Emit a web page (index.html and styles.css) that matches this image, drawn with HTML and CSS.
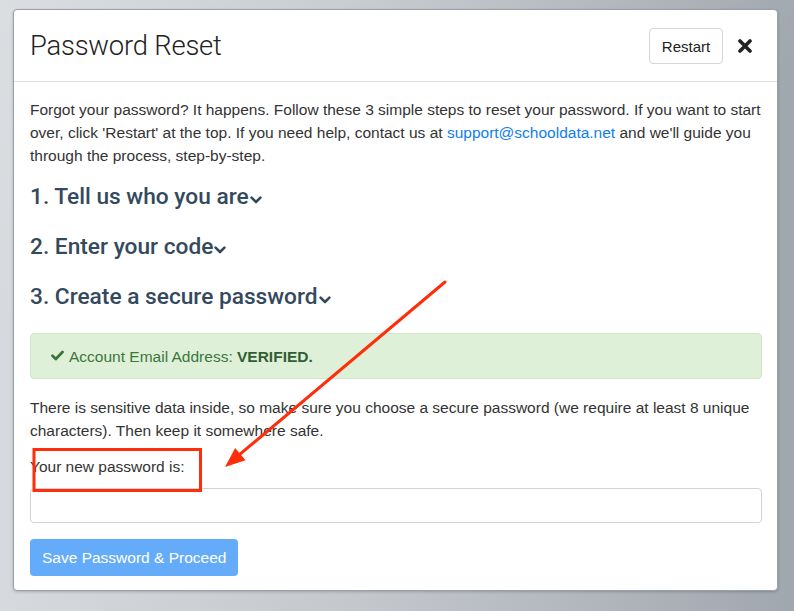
FILE: index.html
```html
<!DOCTYPE html>
<html lang="en">
<head>
<meta charset="utf-8">
<title>Password Reset</title>
<link rel="stylesheet" href="styles.css">
</head>
<body>
<div class="backdrop">
  <div class="modal">
    <div class="modal-header">
      <h2 class="modal-title">Password Reset</h2>
      <div class="header-actions">
        <button class="btn-restart" type="button">Restart</button>
        <button class="btn-close" type="button" aria-label="Close">
          <svg width="14" height="14" viewBox="0 0 14 14"><path d="M2 2 L12 12 M12 2 L2 12" stroke="#222" stroke-width="3.6" stroke-linecap="round"/></svg>
        </button>
      </div>
    </div>
    <div class="modal-body">
      <p class="intro">Forgot your password? It happens. Follow these 3 simple steps to reset your password. If you want to start over, click 'Restart' at the top. If you need help, contact us at <a href="#" class="link">support@schooldata.net</a> and we'll guide you through the process, step-by-step.</p>
      <div class="steps">
        <h3 class="step">1. Tell us who you are<svg class="chev" width="12" height="8" viewBox="0 0 12 8"><path d="M1.6 1.6 L6 6 L10.4 1.6" fill="none" stroke="#34495e" stroke-width="2.6" stroke-linecap="round" stroke-linejoin="round"/></svg></h3>
        <h3 class="step">2. Enter your code<svg class="chev" width="12" height="8" viewBox="0 0 12 8"><path d="M1.6 1.6 L6 6 L10.4 1.6" fill="none" stroke="#34495e" stroke-width="2.6" stroke-linecap="round" stroke-linejoin="round"/></svg></h3>
        <h3 class="step">3. Create a secure password<svg class="chev" width="12" height="8" viewBox="0 0 12 8"><path d="M1.6 1.6 L6 6 L10.4 1.6" fill="none" stroke="#34495e" stroke-width="2.6" stroke-linecap="round" stroke-linejoin="round"/></svg></h3>
      </div>
      <div class="alert">
        <svg class="check" width="13" height="11" viewBox="0 0 13 11"><path d="M1.5 5.8 L4.8 9 L11.5 2" fill="none" stroke="#3c763d" stroke-width="2.8" stroke-linecap="round" stroke-linejoin="round"/></svg>
        <span>Account Email Address: <strong>VERIFIED.</strong></span>
      </div>
      <p class="info">There is sensitive data inside, so make sure you choose a secure password (we require at least 8 unique characters). Then keep it somewhere safe.</p>
      <label class="label" for="pw">Your new password is:</label>
      <input class="input" id="pw" type="text">
      <button class="btn-save" type="button">Save Password &amp; Proceed</button>
    </div>
  </div>
  <svg class="annotation" width="794" height="611" viewBox="0 0 794 611">
    <rect x="34" y="449.5" width="166.5" height="41" fill="none" stroke="#ff2d0a" stroke-width="3"/>
    <line x1="445" y1="282" x2="240" y2="454.2" stroke="#ff2d0a" stroke-width="3" stroke-linecap="round"/>
    <polygon points="225,467 235.2,448 245.5,460.2" fill="#ff2d0a"/>
  </svg>
</div>
</body>
</html>
```
FILE: styles.css
```css
* { box-sizing: border-box; }
html, body { margin: 0; padding: 0; }
body {
  width: 794px;
  height: 611px;
  overflow: hidden;
  font-family: "Liberation Sans", Arial, sans-serif;
  color: #333;
}
.backdrop {
  position: relative;
  width: 794px;
  height: 611px;
  padding: 9px 0 0 13px;
  background:
    linear-gradient(160deg, rgba(255,255,255,0.12) 0%, rgba(255,255,255,0) 40%),
    linear-gradient(90deg, #d6d9dd 0%, #c4c8cd 45%, #aeb3ba 80%, #a1a7af 100%);
}
.modal {
  width: 765px;
  height: 582px;
  background: #fff;
  border: 1px solid #9aa0a8;
  border-radius: 4px;
  box-shadow: 0 1px 3px rgba(0,0,0,0.2);
}
.modal-header {
  display: flex;
  align-items: center;
  justify-content: space-between;
  height: 72px;
  padding: 0 25px 0 16px;
  border-bottom: 1px solid #dfe1e5;
}
.modal-title {
  margin: 0;
  font-family: Roboto, "Liberation Sans", sans-serif;
  font-weight: 300;
  font-size: 27.4px;
  color: #222;
  letter-spacing: -0.2px;
}
.header-actions {
  display: flex;
  align-items: center;
  gap: 15px;
  padding-top: 1px;
}
.btn-restart {
  height: 36px;
  width: 74px;
  padding: 0 11px;
  font-family: "Liberation Sans", Arial, sans-serif;
  font-size: 15px;
  color: #222;
  background: #fff;
  border: 1px solid #d4d6da;
  border-radius: 4px;
}
.btn-close {
  display: flex;
  padding: 0;
  border: 0;
  background: none;
  width: 14px;
  height: 14px;
}
.modal-body {
  padding: 16px 15px 14px 16px;
  font-size: 15.5px;
  line-height: 23px;
}
.intro, .info { margin: 0; }
.link { color: #0f7ef5; text-decoration: none; }
.steps {
  display: flex;
  flex-direction: column;
  gap: 24px;
  margin-top: 17px;
}
.step {
  margin: 0;
  height: 26px;
  line-height: 26px;
  font-family: Roboto, "Liberation Sans", sans-serif;
  font-weight: 500;
  font-size: 22.7px;
  color: #34495e;
  display: flex;
  align-items: baseline;
}
.chev { margin-left: 1px; align-self: flex-end; margin-bottom: 6px; }
.alert {
  margin-top: 23px;
  height: 46px;
  display: flex;
  align-items: center;
  gap: 5px;
  padding: 0 20px;
  background: #dff0d8;
  border: 1px solid #d3e8c9;
  border-radius: 4px;
  color: #3c763d;
}
.alert strong { font-weight: bold; color: #2f5f30; }
.check { flex: none; margin-top: -1px; }
.info { margin-top: 17px; }
.label {
  display: block;
  margin-top: 13px;
}
.input {
  display: block;
  width: 100%;
  height: 35px;
  margin-top: 10px;
  border: 1px solid #ced4da;
  border-radius: 4px;
  background: #fff;
}
.btn-save {
  display: block;
  margin-top: 16px;
  height: 37px;
  padding: 0 12px;
  font-family: "Liberation Sans", Arial, sans-serif;
  font-size: 15.5px;
  color: #fff;
  background: #64acfa;
  border: 0;
  border-radius: 4px;
}
.annotation {
  position: absolute;
  top: 0;
  left: 0;
  pointer-events: none;
}
```
